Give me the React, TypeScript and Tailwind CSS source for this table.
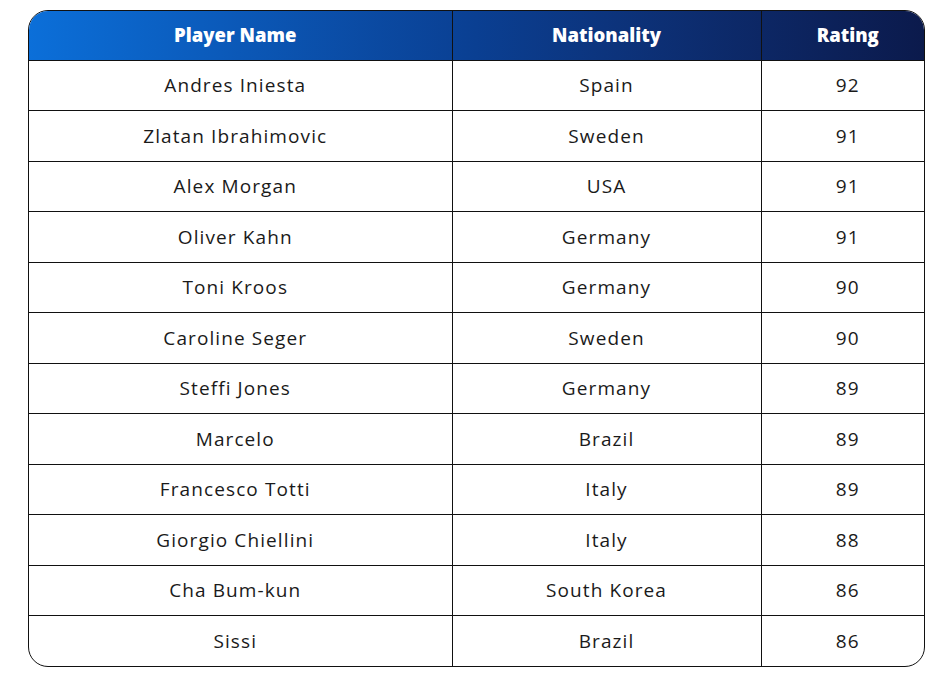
const players = [
  { name: 'Andres Iniesta', nationality: 'Spain', rating: 92 },
  { name: 'Zlatan Ibrahimovic', nationality: 'Sweden', rating: 91 },
  { name: 'Alex Morgan', nationality: 'USA', rating: 91 },
  { name: 'Oliver Kahn', nationality: 'Germany', rating: 91 },
  { name: 'Toni Kroos', nationality: 'Germany', rating: 90 },
  { name: 'Caroline Seger', nationality: 'Sweden', rating: 90 },
  { name: 'Steffi Jones', nationality: 'Germany', rating: 89 },
  { name: 'Marcelo', nationality: 'Brazil', rating: 89 },
  { name: 'Francesco Totti', nationality: 'Italy', rating: 89 },
  { name: 'Giorgio Chiellini', nationality: 'Italy', rating: 88 },
  { name: 'Cha Bum-kun', nationality: 'South Korea', rating: 86 },
  { name: 'Sissi', nationality: 'Brazil', rating: 86 },
];

export default function App() {
  return (
    <div className="min-h-screen bg-white pt-[10px] pl-[28px]" style={{ fontFamily: '"Open Sans", Inter, sans-serif' }}>
      <div className="w-[897px] border border-[#111] rounded-[20px] overflow-hidden">
        <table className="w-full border-collapse text-center">
          <thead>
            <tr className="h-[49px] bg-gradient-to-r from-[#0b6fd9] via-[#0a3f92] to-[#0b1a4c]">
              <th className="w-[423px] pr-[10px] text-white font-extrabold text-[18.5px]">Player Name</th>
              <th className="w-[309px] text-white font-extrabold text-[18.5px] border-l border-[#111]">Nationality</th>
              <th className="pl-[10px] text-white font-extrabold text-[18.5px] border-l border-[#111]">Rating</th>
            </tr>
          </thead>
          <tbody>
            {players.map((p) => (
              <tr key={p.name} className="h-[50.5px] border-t border-[#111]">
                <td className="pr-[10px] text-[19px] text-[#1a1a1a] tracking-[1.1px]">{p.name}</td>
                <td className="text-[19px] text-[#1a1a1a] tracking-[1.1px] border-l border-[#111]">{p.nationality}</td>
                <td className="pl-[10px] text-[19px] text-[#1a1a1a] tracking-[1.1px] border-l border-[#111]">{p.rating}</td>
              </tr>
            ))}
          </tbody>
        </table>
      </div>
    </div>
  );
}
